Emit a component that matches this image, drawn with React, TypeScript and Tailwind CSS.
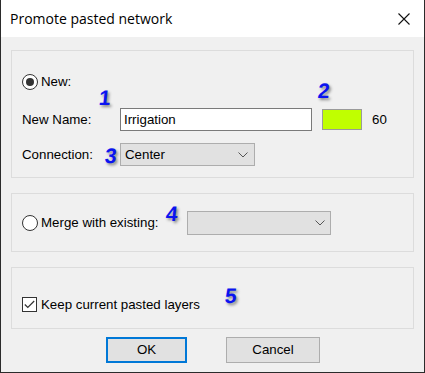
import React from "react";

const ui = "font-['Liberation_Sans',Arial,sans-serif] text-[13.3px] text-black";

function Digit({ n, className }: { n: string; className: string }) {
  return (
    <span
      className={`absolute font-['Liberation_Sans',Arial,sans-serif] text-[21px] leading-none font-bold -skew-x-6 text-[#0a14f0] [text-shadow:2px_2px_3px_rgba(0,0,0,0.45)] ${className}`}
    >
      {n}
    </span>
  );
}

function Radio({ checked }: { checked?: boolean }) {
  return (
    <span className="flex h-4 w-4 items-center justify-center rounded-full border border-[#333] bg-white">
      {checked && <span className="h-2 w-2 rounded-full bg-[#333]" />}
    </span>
  );
}

function Chevron() {
  return (
    <svg width="10" height="6" viewBox="0 0 10 6" fill="none">
      <path d="M0.5 0.5 L5 5 L9.5 0.5" stroke="#555" strokeWidth="1" />
    </svg>
  );
}

export default function App() {
  return (
    <div className={`relative flex h-[373px] w-[425px] flex-col border-x border-b border-[#2b2b2b] bg-[#f0f0f0] ${ui}`}>
      <div className="flex h-[37px] items-center justify-between bg-white pl-[9px] pr-[14px]">
        <span className="font-['Open_Sans','Noto_Sans',sans-serif] text-[14px] text-black">Promote pasted network</span>
        <svg width="12" height="12" viewBox="0 0 12 12">
          <path d="M0.5 0.5 L11.5 11.5 M11.5 0.5 L0.5 11.5" stroke="#111" strokeWidth="1.1" />
        </svg>
      </div>

      <div className="flex flex-col px-[10px] pt-[13px]">
        <div className="flex h-[128px] flex-col border border-[#dcdcdc] px-[10px] pt-[23px]">
          <label className="flex h-4 items-center gap-[3px]">
            <Radio checked />
            <span>New:</span>
          </label>
          <div className="mt-[18px] flex h-[23px] items-center">
            <span className="w-[98px]">New Name:</span>
            <div className="flex h-[23px] w-[192px] items-center border border-[#7a7a7a] bg-white px-[3px]">Irrigation</div>
            <div className="ml-[10px] h-[21px] w-[40px] border border-[#9a9a9a] bg-[#c0ff00]" />
            <span className="ml-[10px]">60</span>
          </div>
          <div className="mt-[12px] flex h-[23px] items-center">
            <span className="w-[98px]">Connection:</span>
            <div className="flex h-[23px] w-[135px] items-center justify-between border border-[#adadad] bg-[#e1e1e1] pl-[4px] pr-[6px]">
              <span>Center</span>
              <Chevron />
            </div>
          </div>
        </div>

        <div className="mt-[15px] flex h-[59px] items-center border border-[#dcdcdc] px-[10px]">
          <label className="flex w-[165px] items-center gap-[3px]">
            <Radio />
            <span>Merge with existing:</span>
          </label>
          <div className="flex h-[24px] w-[144px] items-center justify-end border border-[#adadad] bg-[#e1e1e1] pr-[5px]">
            <Chevron />
          </div>
        </div>

        <div className="mt-[15px] flex h-[62px] items-start border border-[#dcdcdc] px-[10px] pt-[27px]">
          <label className="flex items-center gap-[4px]">
            <span className="flex h-[15px] w-[15px] items-center justify-center border border-[#333] bg-white">
              <svg width="11" height="9" viewBox="0 0 11 9" fill="none">
                <path d="M0.8 4.5 L3.8 7.5 L10.2 1" stroke="#333" strokeWidth="1.2" />
              </svg>
            </span>
            <span>Keep current pasted layers</span>
          </label>
        </div>

        <div className="mt-[8px] flex h-[26px]">
          <button className="ml-[95px] h-[26px] w-[81px] border-2 border-[#0078d7] bg-[#e1e1e1]">OK</button>
          <button className="ml-[39px] h-[26px] w-[94px] border border-[#adadad] bg-[#e1e1e1]">Cancel</button>
        </div>
      </div>

      <Digit n="1" className="left-[98px] top-[87px]" />
      <Digit n="2" className="left-[317px] top-[80px]" />
      <Digit n="3" className="left-[104px] top-[145px]" />
      <Digit n="4" className="left-[165px] top-[203px]" />
      <Digit n="5" className="left-[224px] top-[285px]" />
    </div>
  );
}
